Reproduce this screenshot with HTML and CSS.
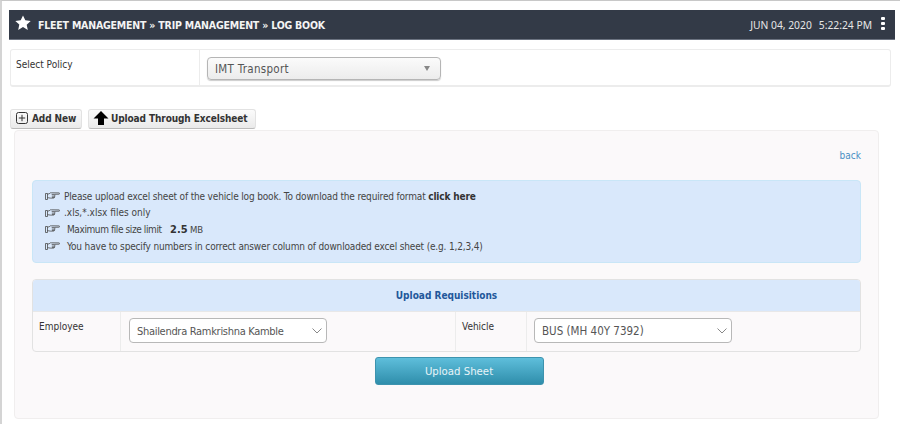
FILE: index.html
```html
<!DOCTYPE html>
<html lang="en">
<head>
<meta charset="utf-8">
<title>Log Book</title>
<link rel="stylesheet" href="styles.css">
</head>
<body>
<svg class="defs" width="0" height="0" aria-hidden="true"><symbol id="hand" viewBox="0 0 15 10"><path d="M.5 2.5h2v6h-2zM2.5 3.2c1.2 0 2-.6 3-1.4h1.2l7.3.1c.9.1.9 1.2 0 1.3l-4.5.1c.3.3.3.7.2 1 .3.3.3.8 0 1.1 .2.4.1.8-.2 1-.2.5-.5.7-1 .7H5.3c-1 0-1.8-.4-2.8-.6M6.7 3.4h2.6M6.8 5.1h2.9M7 6.4h2.5" fill="none" stroke="#4a4a4a" stroke-width=".8"/></symbol></svg>
<div class="page">
  <header class="topbar">
    <svg class="star" viewBox="0 0 16 16" width="16" height="16"><path d="M8 .4l2.3 4.9 5.4.7-4 3.7 1.1 5.4L8 12.1l-4.8 2.9 1.1-5.4-4-3.6 5.4-.7z" fill="#fff"/></svg>
    <span class="crumbs">FLEET MANAGEMENT » TRIP MANAGEMENT » LOG BOOK</span>
    <span class="clock"><span>JUN 04, 2020</span><span>5:22:24 PM</span></span>
    <span class="dots"><i></i><i></i><i></i></span>
  </header>

  <section class="policy">
    <div class="policy-label">Select Policy</div>
    <div class="policy-field">
      <div class="policy-select"><span>IMT Transport</span><b></b></div>
    </div>
  </section>

  <nav class="actions">
    <button class="tool tool-add" type="button">
      <svg viewBox="0 0 12 12" width="12" height="12"><rect x=".5" y=".5" width="11" height="11" rx="2" fill="none" stroke="#333"/><path d="M6 2.8v6.4M2.8 6h6.4" stroke="#333" fill="none"/></svg>
      <span>Add New</span>
    </button>
    <button class="tool tool-upload" type="button">
      <svg viewBox="0 0 16 14" width="16" height="14"><path d="M8 0l7.5 7.5H11V14H5V7.5H.5z" fill="#000"/></svg>
      <span>Upload Through Excelsheet</span>
    </button>
  </nav>

  <main class="panel">
    <div class="back-row"><a class="back" href="#">back</a></div>
    <div class="notice">
      <p><svg class="hand"><use href="#hand"/></svg><span class="t1">Please upload excel sheet of the vehicle log book. To download the required format <strong>click here</strong></span></p>
      <p><svg class="hand"><use href="#hand"/></svg><span class="t1 loose">.xls,*.xlsx files only</span></p>
      <p><svg class="hand"><use href="#hand"/></svg><span class="t2 tight">Maximum file size limit <strong class="size">2.5</strong> <span class="mb">MB</span></span></p>
      <p><svg class="hand"><use href="#hand"/></svg><span class="t2">You have to specify numbers in correct answer column of downloaded excel sheet (e.g. 1,2,3,4)</span></p>
    </div>
    <div class="form-box">
      <div class="form-head">Upload Requisitions</div>
      <div class="form-row">
        <div class="cell-label c1">Employee</div>
        <div class="cell-field c2"><div class="select s1"><span>Shailendra Ramkrishna Kamble</span><svg viewBox="0 0 10 6" width="10" height="6"><path d="M.5.5L5 5 9.5.5" fill="none" stroke="#888"/></svg></div></div>
        <div class="cell-label c3">Vehicle</div>
        <div class="cell-field c4"><div class="select s2"><span>BUS (MH 40Y 7392)</span><svg viewBox="0 0 10 6" width="10" height="6"><path d="M.5.5L5 5 9.5.5" fill="none" stroke="#888"/></svg></div></div>
      </div>
    </div>
    <div class="submit-row"><button class="submit" type="button">Upload Sheet</button></div>
  </main>
</div>
</body>
</html>
```
FILE: styles.css
```css
* { box-sizing: border-box; }
html, body { margin: 0; height: 100%; }
body {
  background: #fff;
  font-family: "DejaVu Sans Condensed", "DejaVu Sans", sans-serif;
  font-size: 10px;
  color: #444;
  overflow: hidden;
}
.defs { display: block; height: 0; }
.page {
  width: 900px;
  height: 424px;
  border-top: 1px solid #c8c8c8;
  border-left: 2px solid #d4d4d4;
  padding: 9px 5px 0 7px;
}
.topbar {
  height: 30px;
  background: #333a47;
  border-bottom: 1px solid #6b7280;
  color: #fff;
  display: flex;
  align-items: center;
  padding: 0 10px 0 6px;
}
.star { flex: none; margin-right: 7px; margin-top: -3px; }
.crumbs {
  font-weight: 700;
  font-size: 10.5px;
  letter-spacing: -.2px;
  color: #f4f4f4;
  white-space: nowrap;
}
.clock {
  margin-left: auto;
  display: flex;
  gap: 7px;
  font-family: "Noto Sans", sans-serif;
  font-size: 10.3px;
  color: #e6e6e6;
}
.dots { display: flex; flex-direction: column; gap: 1.5px; margin-left: 9px; margin-top: -2px; }
.dots i { display: block; width: 4px; height: 3.5px; background: #fff; border-radius: 1px; }
.policy {
  margin: 9px 4px 0 1px;
  height: 38px;
  border: 1px solid #ececec;
  border-bottom-width: 2px;
  border-radius: 3px;
  display: flex;
}
.policy-label {
  width: 189px;
  border-right: 1px solid #ececec;
  padding: 9px 0 0 5px;
  font-size: 10px;
  color: #333;
}
.policy-field { padding: 7px 0 0 7px; }
.policy-select {
  width: 234px;
  height: 23px;
  border: 1px solid #b5b5b5;
  border-radius: 4px;
  background: linear-gradient(#fbfbfb, #ececec);
  box-shadow: 0 1px 1px #ccc;
  display: flex;
  align-items: center;
  justify-content: space-between;
  padding: 0 10px 0 7px;
  font-size: 11.5px;
  letter-spacing: .3px;
  color: #555;
}
.policy-select b {
  width: 0; height: 0;
  border-left: 3px solid transparent;
  border-right: 3px solid transparent;
  border-top: 5px solid #888;
}
.actions {
  display: flex;
  gap: 6px;
  margin: 22px 0 0 1px;
  height: 20px;
}
.tool {
  height: 20px;
  padding: 0 0 2px;
  display: flex;
  align-items: center;
  white-space: nowrap;
  border: 1px solid #e2e2e2;
  border-bottom-color: #bbb;
  border-radius: 3px;
  background: linear-gradient(#fbfbfb, #eaeaea);
  font-family: inherit;
  font-weight: 700;
  font-size: 10px;
  letter-spacing: -.1px;
  color: #333;
}
.tool-add { width: 72px; padding-left: 5px; gap: 4px; }
.tool-upload { width: 168px; padding-left: 4px; gap: 2px; }
.panel {
  margin: 1px 16px 0 5px;
  height: 289px;
  background: #fbf9fa;
  border: 1px solid #f0eeee;
  border-radius: 4px;
  padding: 0 17px;
}
.back-row { display: flex; justify-content: flex-end; padding-top: 18px; height: 49px; }
.back { color: #4a90c4; text-decoration: none; font-size: 10px; line-height: 14px; }
.notice {
  height: 83px;
  background: #d9e8fb;
  border: 1px solid #c9e6f7;
  border-radius: 4px;
  padding: 7px 0 0 12px;
  font-size: 10px;
  letter-spacing: -.16px;
  color: #444;
}
.notice p { margin: 0; height: 16.6px; display: flex; align-items: center; }
.hand { width: 15px; height: 10px; flex: none; margin-right: 4px; }
.t2 { margin-left: 3px; }
.loose { letter-spacing: 0; }
.tight { letter-spacing: -.4px; }
.size { margin: 0 0 0 6px; font-size: 11px; letter-spacing: 0; }
.mb { font-size: 9.5px; letter-spacing: -.3px; }
strong { color: #333; }
.form-box {
  margin-top: 16px;
  border: 1px solid #e2e2e2;
  border-radius: 4px;
  height: 73px;
  overflow: hidden;
}
.form-head {
  height: 31px;
  background: #d9e8fb;
  text-align: center;
  line-height: 31px;
  font-weight: 700;
  font-size: 10px;
  color: #22579a;
}
.form-row { display: flex; height: 40px; border-top: 1px solid #e8e8e8; }
.cell-label { padding: 9px 0 0 6px; font-size: 10px; color: #333; border-right: 1px solid #ececec; }
.c1 { width: 88px; }
.c2 { width: 335px; }
.c3 { width: 71px; }
.c4 { flex: 1; }
.cell-field { padding: 6px 0 0 8px; }
.c4.cell-field { padding-left: 7px; }
.c2.cell-field { border-right: 1px solid #ececec; }
.select {
  height: 25px;
  background: #fff;
  border: 1px solid #b8b8b8;
  border-radius: 4px;
  display: flex;
  align-items: center;
  justify-content: space-between;
  padding: 1px 4px 0 7px;
  font-size: 11.5px;
  color: #555;
}
.s1 { width: 198px; font-size: 11px; letter-spacing: -.3px; }
.s2 { width: 198px; }
.submit-row { display: flex; justify-content: center; margin-top: 5px; padding-left: 25px; }
.submit {
  width: 169px;
  height: 28px;
  border: 1px solid #3d93ae;
  border-radius: 3px;
  background: linear-gradient(#5ebedb, #2f8eab);
  color: #e8f4f8;
  font-family: inherit;
  font-size: 11.3px;
  padding: 0;
}
```
